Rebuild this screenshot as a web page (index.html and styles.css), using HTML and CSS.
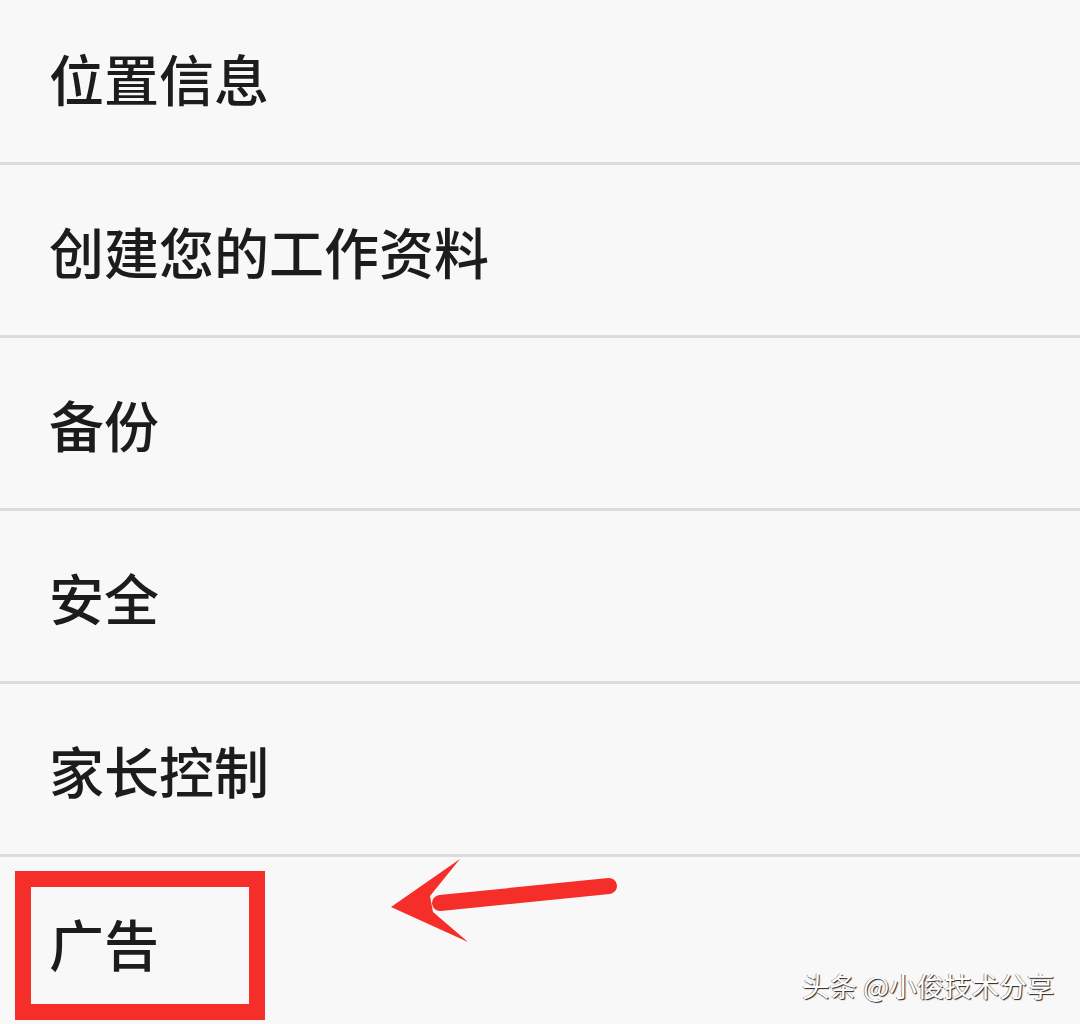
FILE: index.html
```html
<!DOCTYPE html>
<html lang="zh-CN">
<head>
<meta charset="utf-8">
<title>设置</title>
<link rel="stylesheet" href="styles.css">
</head>
<body>
<div class="page">
  <ul class="list">
    <li class="row">位置信息</li>
    <li class="row">创建您的工作资料</li>
    <li class="row">备份</li>
    <li class="row">安全</li>
    <li class="row">家长控制</li>
    <li class="row">广告</li>
  </ul>
  <div class="highlight"></div>
  <svg class="arrow" width="1080" height="1024" viewBox="0 0 1080 1024">
    <line x1="440" y1="903" x2="609" y2="886" stroke="#f52e29" stroke-width="16" stroke-linecap="round"/>
    <polygon points="391,907 460,859 430,896 433,912 468,942" fill="#f52e29"/>
  </svg>
  <div class="watermark">头条 @小俊技术分享</div>
</div>
</body>
</html>
```
FILE: styles.css
```css
html, body {
  margin: 0;
  padding: 0;
}
body {
  background: #f9f8f9;
  font-family: "Noto Sans CJK SC", "Noto Sans", sans-serif;
}
.page {
  position: relative;
  width: 1080px;
  height: 1024px;
  overflow: hidden;
  background: #f9f8f9;
}
.list {
  list-style: none;
  margin: -8px 0 0 0;
  padding: 0;
}
.row {
  height: 170px;
  display: flex;
  align-items: center;
  padding-left: 49px;
  font-size: 55px;
  font-weight: 500;
  color: #1c1c1c;
  border-bottom: 3px solid #dcdcdc;
  box-sizing: content-box;
}
.highlight {
  position: absolute;
  left: 15px;
  top: 871px;
  width: 250px;
  height: 149px;
  box-sizing: border-box;
  border: 16px solid #f52e29;
}
.arrow {
  position: absolute;
  left: 0;
  top: 0;
  pointer-events: none;
}
.watermark {
  position: absolute;
  left: 802px;
  top: 965px;
  font-size: 27.5px;
  color: #ffffff;
  text-shadow: 1px 1px 1px #222, -1px 0 0 rgba(0,0,0,0.4);
  white-space: nowrap;
}
```
